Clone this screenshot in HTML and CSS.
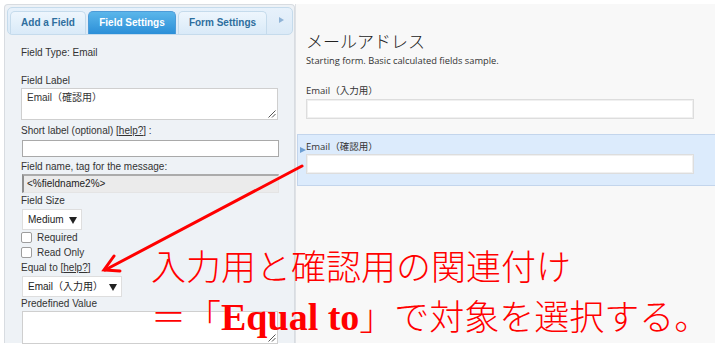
FILE: index.html
```html
<!DOCTYPE html>
<html lang="ja">
<head>
<meta charset="utf-8">
<title>Field Settings</title>
<link rel="stylesheet" href="styles.css">
</head>
<body>
<div class="page">
  <aside class="panel">
    <div class="tabs">
      <div class="tab tab-add">Add a Field</div>
      <div class="tab tab-field active">Field Settings</div>
      <div class="tab tab-form">Form Settings</div>
      <div class="tab-more"><svg width="5" height="6" viewBox="0 0 5 6"><path d="M0 0L5 3L0 6Z" fill="#8fb3d6"/></svg></div>
    </div>
    <div class="settings">
      <div class="ftype">Field Type: Email</div>
      <div class="lbl l-label">Field Label</div>
      <div class="ta ta-label">Email（確認用）<svg class="grip" width="9" height="9" viewBox="0 0 9 9"><path d="M8.5 1.5L1.5 8.5M8.5 5L5 8.5" stroke="#555" stroke-width="1"/></svg></div>
      <div class="lbl l-short">Short label (optional) [<span class="help">help?</span>] :</div>
      <div class="inp inp-short"></div>
      <div class="lbl l-name">Field name, tag for the message:</div>
      <div class="inp inp-ro">&lt;%fieldname2%&gt;</div>
      <div class="lbl l-size">Field Size</div>
      <div class="sel sel-size"><span>Medium</span><svg width="8" height="8" viewBox="0 0 8 8"><path d="M0 1H8L4 8Z" fill="#222"/></svg></div>
      <div class="chk-row"><span class="chk"></span>Required</div>
      <div class="chk-row"><span class="chk"></span>Read Only</div>
      <div class="lbl l-equal">Equal to [<span class="help">help?</span>]</div>
      <div class="sel sel-equal"><span>Email（入力用）</span><svg width="8" height="8" viewBox="0 0 8 8"><path d="M0 1H8L4 8Z" fill="#222"/></svg></div>
      <div class="lbl l-pre">Predefined Value</div>
      <div class="ta ta-pre"><svg class="grip" width="9" height="9" viewBox="0 0 9 9"><path d="M8.5 1.5L1.5 8.5M8.5 5L5 8.5" stroke="#555" stroke-width="1"/></svg></div>
    </div>
  </aside>
  <main class="form">
    <header class="form-head">
      <h1 class="title">メールアドレス</h1>
      <p class="desc">Starting form. Basic calculated fields sample.</p>
    </header>
    <div class="fld fld-first">
      <div class="fld-label">Email（入力用）</div>
      <div class="fld-input"></div>
    </div>
    <div class="fld selected">
      <span class="marker"></span>
      <div class="fld-label">Email（確認用）</div>
      <div class="fld-input"></div>
    </div>
  </main>
</div>
<svg class="arrow" width="715" height="347" viewBox="0 0 715 347">
  <g stroke="#ff0000" stroke-width="3" stroke-linecap="round" fill="none">
    <path d="M302 166L105 270"/>
    <path d="M114 256L104 270L120 271"/>
  </g>
</svg>
<div class="note">
  <div class="note-line">入力用と確認用の関連付け</div>
  <div class="note-line">＝「<b class="latin">Equal to</b>」で対象を選択する。</div>
</div>
</body>
</html>
```

FILE: styles.css
```css
html, body {
  margin: 0;
  padding: 0;
}
body {
  width: 715px;
  height: 347px;
  overflow: hidden;
  position: relative;
  background: #ffffff;
  font-family: "Liberation Sans", "Noto Sans CJK JP", sans-serif;
  color: #333;
}
.page {
  display: flex;
  align-items: stretch;
  padding: 4px 0 0 4px;
  height: 343px;
  box-sizing: border-box;
}

/* ---------- left settings panel ---------- */
.panel {
  width: 291px;
  flex: none;
  box-sizing: border-box;
  border: 1px solid #d8dce1;
  border-bottom: none;
  border-radius: 4px 4px 0 0;
  background: #eef2f6;
  padding: 2px 1px 0 2px;
}
.tabs {
  display: flex;
  align-items: flex-end;
  gap: 2px;
  height: 28px;
  box-sizing: border-box;
  border: 1px solid #c5dbec;
  border-radius: 5px;
  background: linear-gradient(#e7f1fb, #dbeaf7);
  padding: 3px 2px 0 2px;
}
.tab {
  height: 23px;
  box-sizing: border-box;
  border: 1px solid #c5dbec;
  border-bottom: none;
  border-radius: 5px 5px 0 0;
  background: linear-gradient(#eef6fd, #d9eaf8);
  color: #2e6e9e;
  font-size: 10px;
  font-weight: bold;
  line-height: 22px;
  text-align: center;
}
.tab-add { width: 76px; }
.tab-field { width: 88px; }
.tab-form { width: 89px; }
.tab.active {
  background: linear-gradient(#5bb6ea, #2b8fd8);
  border-color: #4c9bd8;
  color: #ffffff;
}
.tab-more {
  flex: 1;
  align-self: flex-start;
  display: flex;
  justify-content: flex-end;
  padding: 6px 6px 0 0;
}
.tab-more svg { display: block; }

.settings {
  padding-left: 14px;
  font-size: 10px;
  line-height: 12px;
}
.ftype { margin-top: 12px; }
.l-label { margin-top: 16px; }
.l-short { margin-top: 5px; }
.l-name { margin-top: 4px; }
.l-size { margin-top: 2px; }
.l-equal { margin-top: 2px; }
.l-pre { margin-top: 1px; }
.help { text-decoration: underline; }

.ta {
  position: relative;
  width: 257px;
  box-sizing: border-box;
  background: #fff;
  border: 1px solid #cfcfcf;
  padding: 3px 5px;
  line-height: 12px;
}
.ta-label { height: 32px; margin-top: 1px; }
.ta-pre { height: 33px; margin-top: 1px; margin-left: 1px; width: 256px; }
.grip {
  position: absolute;
  right: 1px;
  bottom: 1px;
}
.inp {
  width: 257px;
  box-sizing: border-box;
  margin-left: 1px;
  background: #fff;
}
.inp-short {
  height: 17px;
  margin-top: 3px;
  border: 1px solid #a9a9a9;
}
.inp-ro {
  height: 19px;
  margin-top: 1px;
  background: #ebebeb;
  border-top: 2px solid #ababab;
  border-left: 2px solid #8e8e8e;
  border-right: 1px solid #e4e4e4;
  border-bottom: 1px solid #e4e4e4;
  padding-left: 3px;
  line-height: 16px;
  color: #222;
}
.sel {
  display: flex;
  align-items: center;
  justify-content: space-between;
  height: 21px;
  box-sizing: border-box;
  margin-top: 2px;
  margin-left: 1px;
  padding: 0 4px 0 5px;
  background: #fff;
  border: 1px solid #dedede;
  color: #222;
}
.sel svg { display: block; }
.sel-size { width: 60px; }
.sel-equal { width: 100px; }
.chk-row {
  display: flex;
  align-items: center;
  height: 15px;
  gap: 5px;
}
.chk {
  width: 11px;
  height: 11px;
  box-sizing: border-box;
  border: 1px solid #9d9d9d;
  border-radius: 2px;
  background: #fff;
}

/* ---------- right form preview ---------- */
.form {
  flex: 1;
  background: #f8f8f8;
  border-left: 1px solid #dfe2e6;
  padding-left: 1px;
  font-family: "Open Sans", "Noto Sans CJK JP", sans-serif;
  color: #333;
}
.form-head {
  padding: 27px 0 0 9px;
}
.title {
  margin: 0;
  font-family: "Noto Sans CJK JP", sans-serif;
  font-weight: 300;
  font-size: 17px;
  line-height: 20px;
  color: #222;
}
.desc {
  margin: 4px 0 0;
  font-size: 9.3px;
  line-height: 12px;
  color: #333;
}
.fld {
  position: relative;
  border: 1px solid transparent;
  padding: 5px 8px 11px;
}
.fld-first { margin-top: 12px; padding-bottom: 0; }
.fld-label {
  font-size: 9.5px;
  line-height: 12px;
  color: #333;
}
.fld-input {
  width: 388px;
  height: 20px;
  box-sizing: border-box;
  margin-top: 2px;
  background: #fff;
  border: 1px solid #dddddd;
  box-shadow: inset 0 0 0 1px #f0f0f0;
}
.selected {
  margin-top: 14px;
  background: #dcebfc;
  border-color: #c3d5ec;
  border-right: none;
  padding-top: 6px;
}
.selected .fld-input { margin-top: 1px; }
.marker {
  position: absolute;
  left: 2px;
  top: 12px;
  width: 0;
  height: 0;
  border-left: 6px solid #6d9fd3;
  border-top: 3px solid transparent;
  border-bottom: 3px solid transparent;
}

/* ---------- red annotation ---------- */
.arrow {
  position: absolute;
  left: 0;
  top: 0;
  pointer-events: none;
}
.note {
  position: absolute;
  left: 151px;
  top: 240px;
  font-family: "Noto Sans CJK JP", sans-serif;
  font-weight: 300;
  font-size: 35px;
  line-height: 50px;
  color: #ff0000;
  white-space: nowrap;
  text-shadow: 0 0 1px #ffffff;
}
.latin {
  font-family: "Liberation Serif", serif;
  font-weight: bold;
  font-size: 38px;
}
```
